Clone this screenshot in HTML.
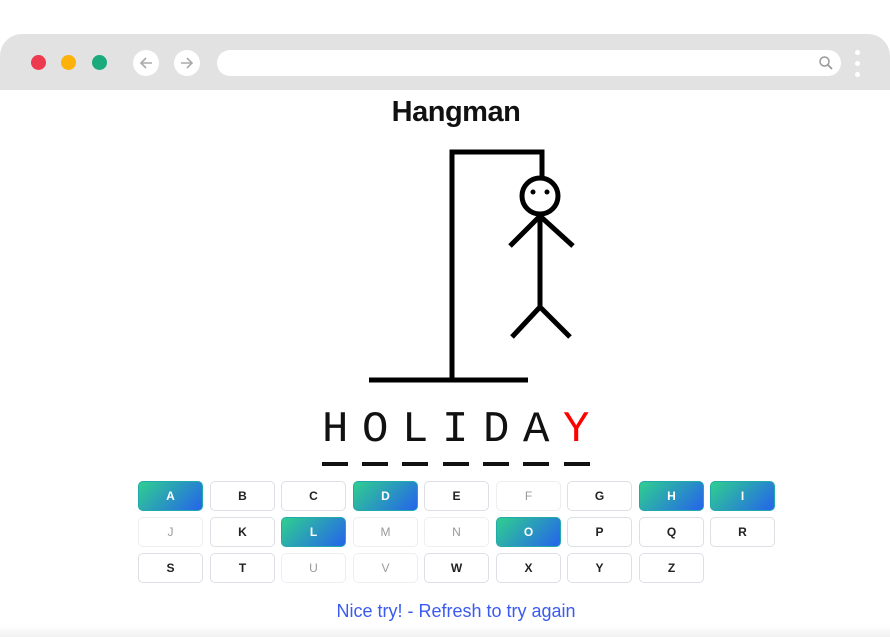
<!DOCTYPE html>
<html><head><meta charset="utf-8"><style>
*{margin:0;padding:0;box-sizing:border-box}
body{width:890px;height:637px;background:#fff;position:relative;overflow:hidden;font-family:"Liberation Sans",sans-serif}
.bar{position:absolute;left:0;top:34px;width:890px;height:56px;background:#e2e2e2;border-radius:22px 22px 0 0}
.dot{position:absolute;width:15px;height:15px;border-radius:50%;top:55px}
.cb{position:absolute;top:50px;width:26px;height:26px;border-radius:50%;background:#fff}
.addr{position:absolute;left:217px;top:50px;width:624px;height:26px;border-radius:13px;background:#fff}
.m{position:absolute;left:855px;width:5px;height:5px;border-radius:50%;background:#fff}
h1{position:absolute;top:96px;left:0;width:912px;text-align:center;font-size:29px;font-weight:bold;color:#111;letter-spacing:-0.5px}
.word{position:absolute;top:405px;left:322px;font-family:"Liberation Mono",monospace;font-size:44px;color:#111}
.word span{position:absolute;top:0;width:26px;text-align:center}
.us{position:absolute;top:462px;width:26px;height:4px;background:#111}
.k{position:absolute;width:65px;height:30px;border:1px solid #dcdfe4;border-radius:5px;background:#fff;font-size:12px;font-weight:bold;color:#222;text-align:center;line-height:28px}
.k.s{background:linear-gradient(135deg,#2fcf8f,#2563eb);color:#fff;border-color:#2aa}
.k.d{color:#999;font-weight:normal;border-color:#eceef1}
.msg{position:absolute;top:601px;left:0;width:912px;text-align:center;font-size:18px;color:#3b5bf0}
.foot{position:absolute;top:626px;left:0;width:890px;height:11px;background:linear-gradient(#fff,#f1f1f1)}
</style></head><body>
<div class="bar"></div>
<div class="dot" style="left:31px;background:#ee3a4e"></div>
<div class="dot" style="left:61px;background:#fcb208"></div>
<div class="dot" style="left:92px;background:#1aaa7c"></div>
<div class="cb" style="left:133px"></div>
<div class="cb" style="left:174px"></div>
<svg style="position:absolute;left:133px;top:50px" width="80" height="26"><g stroke="#aaa" stroke-width="1.6" fill="none"><path d="M19 13H8M13 8L8 13L13 18"/><path d="M48 13H59M54 8L59 13L54 18"/></g></svg>
<div class="addr"></div>
<svg style="position:absolute;left:818px;top:55px" width="16" height="16"><circle cx="6.5" cy="6.5" r="4.5" stroke="#999" stroke-width="1.5" fill="none"/><path d="M10 10L14 14" stroke="#999" stroke-width="1.8"/></svg>
<div class="m" style="top:50px"></div><div class="m" style="top:61px"></div><div class="m" style="top:72px"></div>
<h1>Hangman</h1>
<svg style="position:absolute;left:0;top:0" width="890" height="400"><g stroke="#000" stroke-width="5" fill="none">
<path d="M369 380H528M452 380V152H542V178"/>
<circle cx="540" cy="196" r="18"/>
<path d="M540 214V307M540 216L510 246M540 216L573 246M540 307L512 337M540 307L570 337"/>
</g><circle cx="533" cy="192" r="2.5"/><circle cx="547" cy="192" r="2.5"/></svg>
<div class="word"><span style="left:0">H</span><span style="left:40px">O</span><span style="left:80px">L</span><span style="left:120px">I</span><span style="left:161px">D</span><span style="left:201px">A</span><span style="left:241px;color:#f00">Y</span></div>
<div class="us" style="left:322px"></div><div class="us" style="left:362px"></div><div class="us" style="left:402px"></div><div class="us" style="left:443px"></div><div class="us" style="left:483px"></div><div class="us" style="left:523px"></div><div class="us" style="left:564px"></div>
<div class="k s" style="left:138px;top:481px">A</div>
<div class="k" style="left:210px;top:481px">B</div>
<div class="k" style="left:281px;top:481px">C</div>
<div class="k s" style="left:353px;top:481px">D</div>
<div class="k" style="left:424px;top:481px">E</div>
<div class="k d" style="left:496px;top:481px">F</div>
<div class="k" style="left:567px;top:481px">G</div>
<div class="k s" style="left:639px;top:481px">H</div>
<div class="k s" style="left:710px;top:481px">I</div>
<div class="k d" style="left:138px;top:517px">J</div>
<div class="k" style="left:210px;top:517px">K</div>
<div class="k s" style="left:281px;top:517px">L</div>
<div class="k d" style="left:353px;top:517px">M</div>
<div class="k d" style="left:424px;top:517px">N</div>
<div class="k s" style="left:496px;top:517px">O</div>
<div class="k" style="left:567px;top:517px">P</div>
<div class="k" style="left:639px;top:517px">Q</div>
<div class="k" style="left:710px;top:517px">R</div>
<div class="k" style="left:138px;top:553px">S</div>
<div class="k" style="left:210px;top:553px">T</div>
<div class="k d" style="left:281px;top:553px">U</div>
<div class="k d" style="left:353px;top:553px">V</div>
<div class="k" style="left:424px;top:553px">W</div>
<div class="k" style="left:496px;top:553px">X</div>
<div class="k" style="left:567px;top:553px">Y</div>
<div class="k" style="left:639px;top:553px">Z</div>
<div class="msg">Nice try! - Refresh to try again</div>
<div class="foot"></div>
</body></html>
